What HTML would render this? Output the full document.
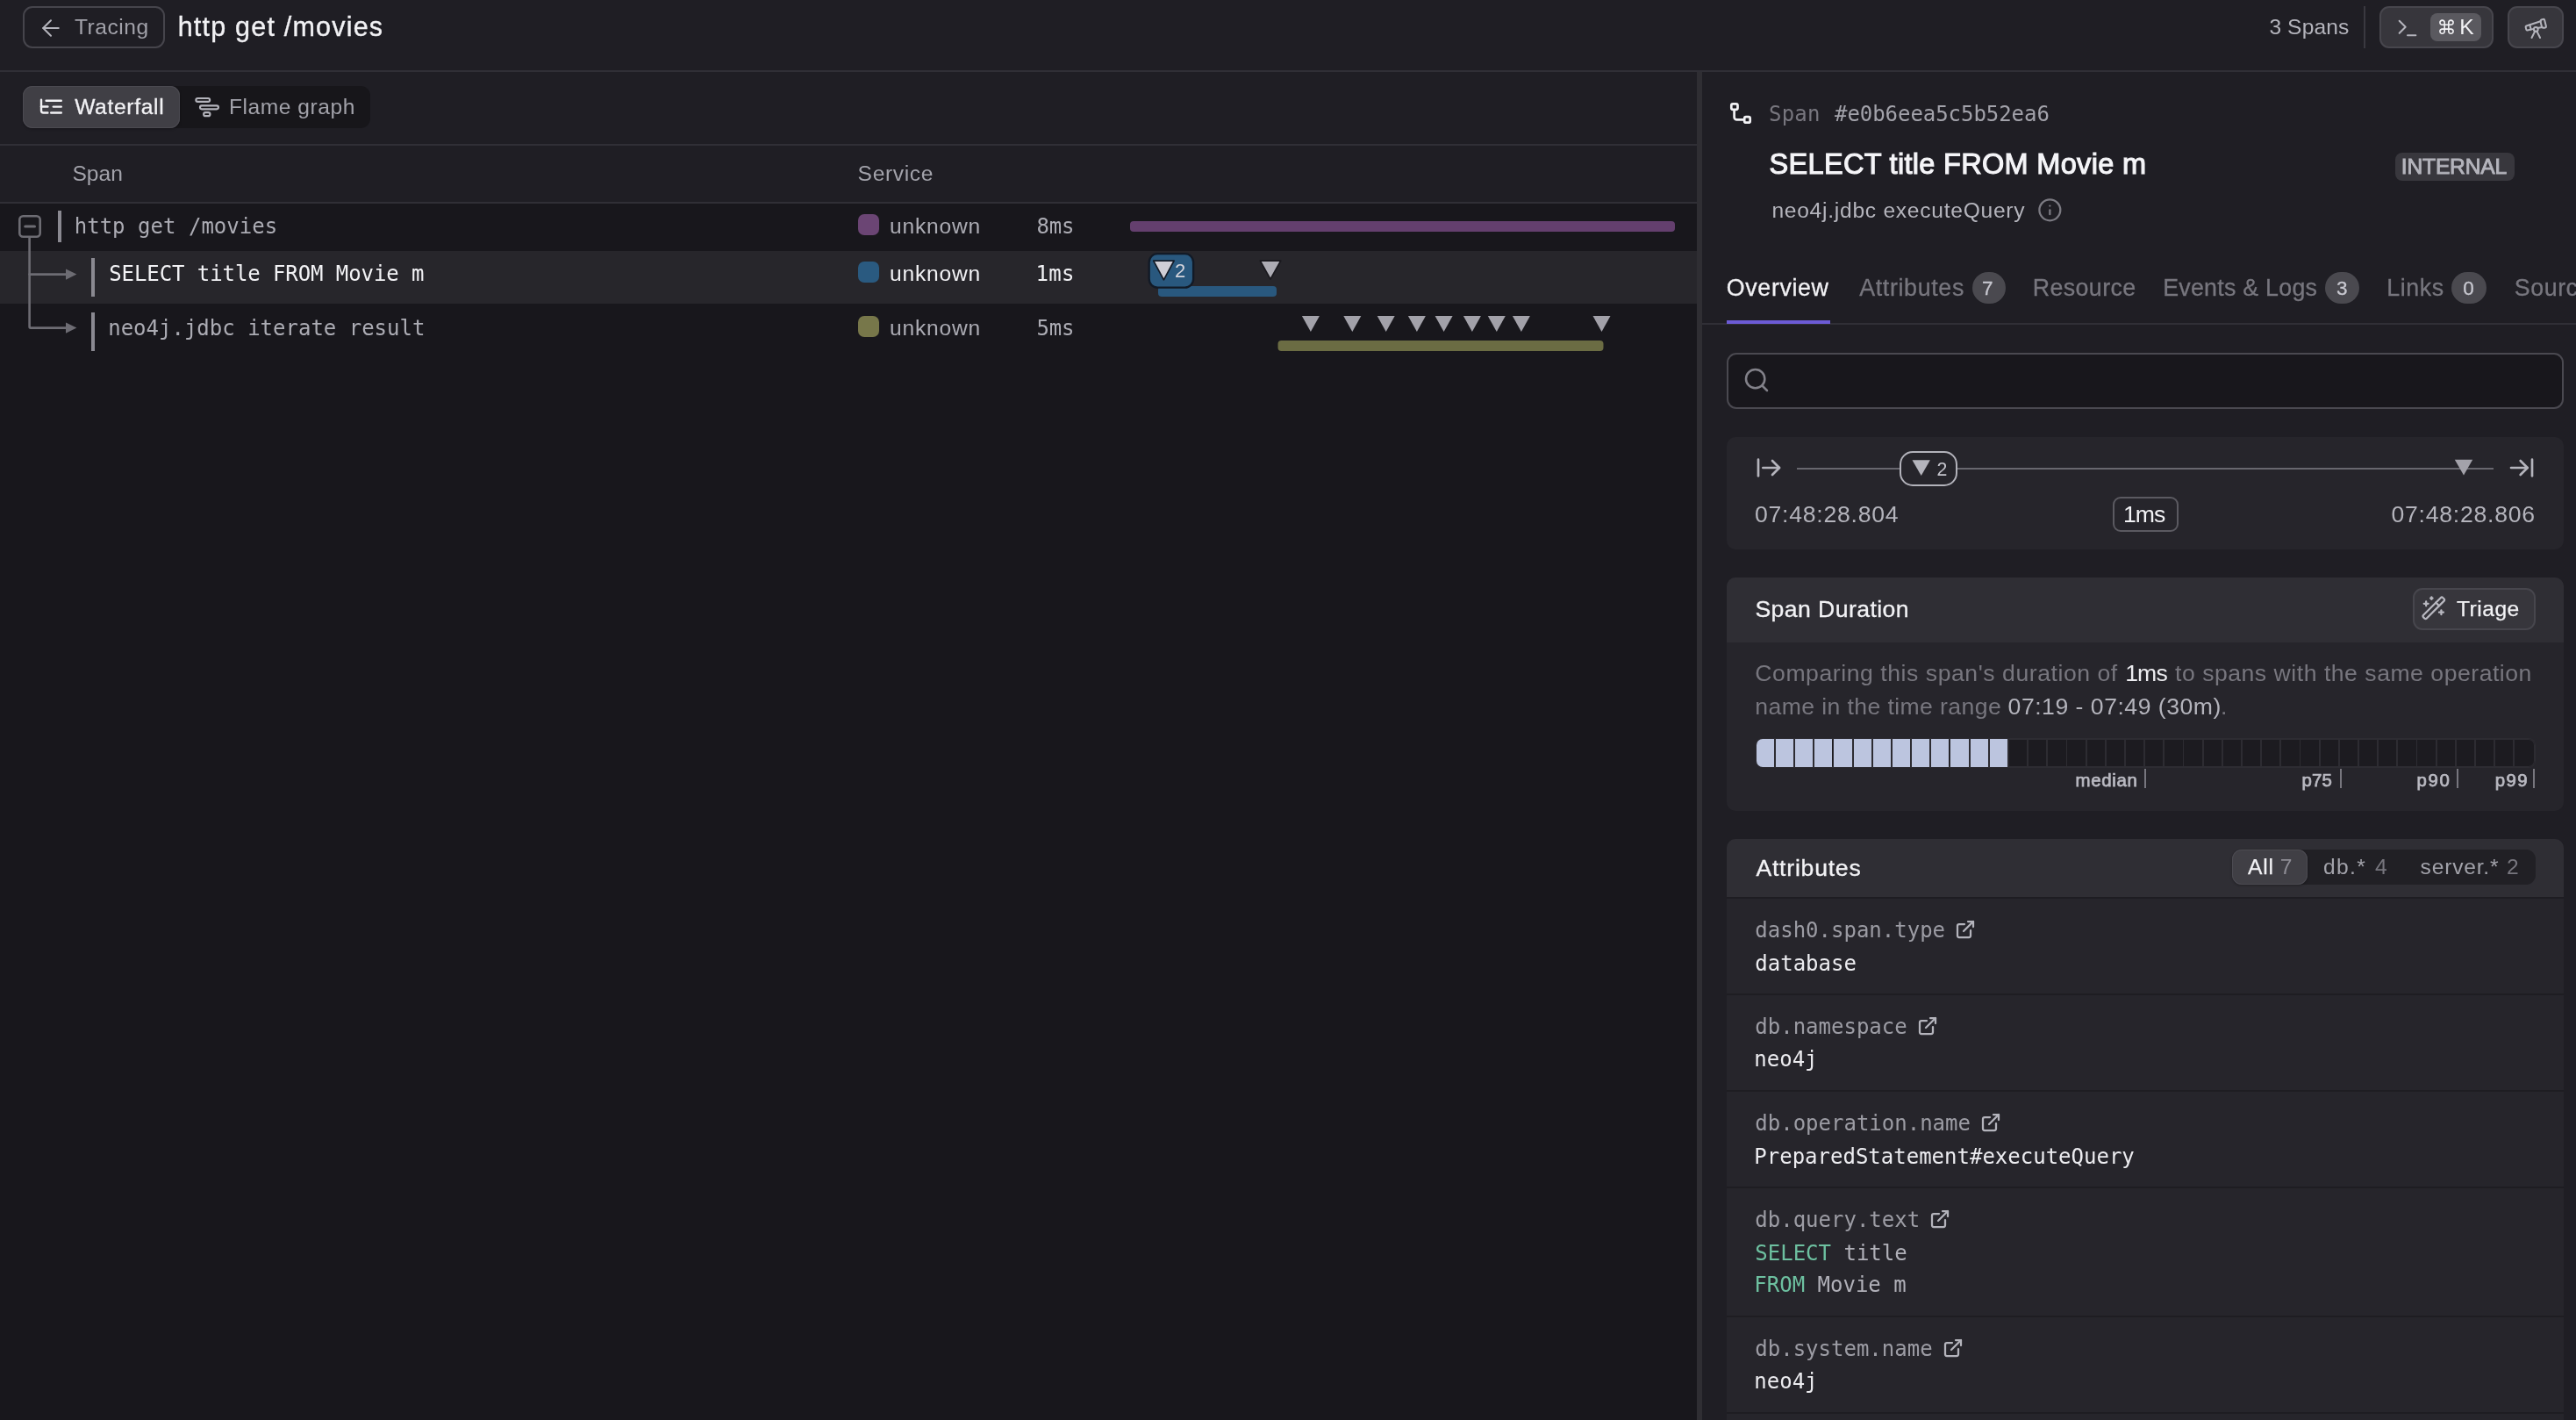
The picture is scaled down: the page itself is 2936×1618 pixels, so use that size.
<!DOCTYPE html>
<html lang="en">
<head>
<meta charset="utf-8">
<title>http get /movies - Tracing</title>
<style>
*{box-sizing:border-box;margin:0;padding:0}
html,body{width:2936px;height:1618px;overflow:hidden;background:#1f1e24}
@media (max-width:1600px){html{zoom:.5}}
body{position:relative;font-family:"Liberation Sans", "DejaVu Sans", sans-serif;color:#f2f2f5;-webkit-font-smoothing:antialiased}
body>*{will-change:transform}
.abs,.t,svg.i{position:absolute}
.t{white-space:nowrap;line-height:40px;display:block}
.m{font-family:"DejaVu Sans Mono", "Liberation Mono", monospace}
svg.i{overflow:visible;fill:none;stroke-linecap:round;stroke-linejoin:round}
/* top bar */
.topbar{left:0;top:0;width:2936px;height:82px;border-bottom:2px solid #302f36;background:#1f1e24}
.btn{border:2px solid #46454c;border-radius:11px}
.btn.fill{background:#37363c;border-color:#47464d}
.kbd{background:#5a595f;border-radius:8px}
.vsep{background:#3a3940}
/* left pane */
.left{left:0;top:82px;width:1934px;height:1536px;background:#18171c;overflow:hidden}
.toolbar{left:0;top:0;width:1934px;height:84px;background:#1f1e24;border-bottom:2px solid #302f36}
.seg{background:#17161a;border-radius:11px}
.seg .on{background:#403f45;border-radius:11px;box-shadow:inset 0 0 0 1px #4b4a51,0 1px 3px rgba(0,0,0,.3)}
.thead{left:0;top:84px;width:1934px;height:66px;background:#1f1e24;border-bottom:2px solid #302f36}
.row{left:0;width:1934px}
.row.sel{background:#27262b}
.bar{border-radius:4px;height:12px}
.sw{width:24px;height:24px;border-radius:7px}
.divider{left:1934px;top:82px;width:6px;height:1536px;background:#2f2e33}
/* right pane */
.right{left:1940px;top:82px;width:996px;height:1536px;background:#1f1e24;overflow:hidden}
.badge{background:#38373d;border-radius:8px}
.cnt{background:#4a494f;border-radius:18px}
.tabline{background:#302f36}
.tabsel{background:#6c5bd6}
.search{border:2px solid #4a4950;border-radius:11px;background:#18171c}
.card{background:#26252b;border-radius:10px;overflow:hidden}
.card .hd{left:0;top:0;width:100%;background:#2f2e34}
.sepline{background:#1e1d22;height:2px;left:0;width:100%}
.pill{border:2.4px solid #b2b2ba;border-radius:15px;background:#26252b}
.dur{border:2px solid #5b5a61;border-radius:9px}
.hist{border-radius:7px;background:#1c1b20;box-shadow:inset 0 0 0 1px #2d2c32,0 0 0 1px #2d2c32}
.hist b:first-of-type{border-radius:7px 0 0 7px}
.hist i{position:absolute;top:0;height:100%;width:1.9px;background:#2d2c32}
.hist b{position:absolute;top:0;height:100%;background:#bcc5df}
.tick{width:2px;background:#77767e}
</style>
</head>
<body>
<header class="abs topbar"><div class="abs btn" style="left:26px;top:7px;width:162px;height:48px;"></div><svg class="i" style="left:42.75px;top:17.1px" width="30" height="30" viewBox="0 0 24 24" stroke="#b4b4bc" stroke-width="1.6" ><path d="m12 19-7-7 7-7"/><path d="M19 12H5"/></svg><span class="t" style="left:85px;top:11.2px;font-size:24.6px;color:#a2a2aa;letter-spacing:0.5px">Tracing</span><h1 class="t" style="left:202.68px;top:10px;font-size:30.5px;color:#f2f2f5;font-weight:400;letter-spacing:1.21px;-webkit-text-stroke:0.35px">http get /movies</h1><span class="t" style="left:2586.4px;top:11px;font-size:24.6px;color:#b4b4bc;letter-spacing:0.11px">3 Spans</span><div class="abs vsep" style="left:2694px;top:7px;width:2px;height:48px;"></div><div class="abs btn fill" style="left:2712px;top:7px;width:130px;height:48px;"></div><svg class="i" style="left:2729.7px;top:18.1px" width="28" height="28" viewBox="0 0 24 24" stroke="#b4b4bc" stroke-width="1.75" ><polyline points="4 17 10 11 4 5"/><line x1="12" x2="20" y1="19" y2="19"/></svg><div class="abs kbd" style="left:2770px;top:15px;width:58px;height:32px;"></div><span class="t cmd" style="left:2777.5px;top:12.2px;font-size:22px;color:#f2f2f5">⌘</span><span class="t" style="left:2803.2px;top:11.2px;font-size:24.6px;color:#f2f2f5">K</span><div class="abs btn fill" style="left:2858px;top:7px;width:64px;height:48px;"></div><svg class="i" style="left:2875.9px;top:17.8px" width="28.6" height="28.6" viewBox="0 0 24 24" stroke="#b4b4bc" stroke-width="1.7" ><path d="m10.065 12.493-6.18 1.318a.934.934 0 0 1-1.108-.702l-.537-2.15a1.07 1.07 0 0 1 .691-1.265l13.504-4.44"/><path d="m13.56 11.747 4.332-.924"/><path d="m16 21-3.105-6.21"/><path d="M16.485 5.94a2 2 0 0 1 1.455-2.425l1.09-.272a1 1 0 0 1 1.212.727l1.515 6.06a1 1 0 0 1-.727 1.213l-1.09.272a2 2 0 0 1-2.425-1.455z"/><path d="m6.158 8.633 1.114 4.456"/><path d="m8 21 3.105-6.21"/><circle cx="12" cy="13" r="2"/></svg></header>
<main class="abs left"><div class="abs toolbar"><div class="abs seg" style="left:26px;top:16px;width:396px;height:48px;"><div class="abs on" style="left:0px;top:0px;width:179px;height:48px;"></div></div><svg class="i" style="left:0;top:0" width="300" height="84" viewBox="0 82 300 84" stroke="#f2f2f5" stroke-width="2.4"><path d="M47 113.6V126a2.5 2.5 0 0 0 2.5 2.5H54.4"/><path d="M47 121.5H54.4"/><path d="M52.6 114.7H69.8"/><path d="M60.8 121.6H69.8"/><path d="M58.2 128.5H69.8"/><g stroke="#b4b4bc" stroke-width="2.2"><rect x="223.4" y="112" width="15.7" height="3.9" rx="1.95"/><rect x="228" y="120.4" width="20.9" height="3.9" rx="1.95"/><rect x="232.2" y="128.1" width="7.2" height="4.1" rx="2"/></g></svg><span class="t" style="left:85.15px;top:19.9px;font-size:24.6px;color:#f2f2f5;letter-spacing:0.68px;-webkit-text-stroke:0.3px">Waterfall</span><span class="t" style="left:261px;top:19.9px;font-size:24.6px;color:#a2a2aa;letter-spacing:0.53px">Flame graph</span></div><div class="abs thead"><span class="t" style="left:82.4px;top:12px;font-size:24.6px;color:#a2a2aa;letter-spacing:0.01px">Span</span><span class="t" style="left:977.6px;top:12px;font-size:24.6px;color:#a2a2aa;letter-spacing:0.63px">Service</span></div><div class="abs row" style="top:150px;height:54px"><div class="abs" style="left:66px;top:8px;width:4px;height:36px;background:#8a8991"></div><span class="t m" style="left:84.7px;top:5.7px;font-size:24px;color:#acacb4;letter-spacing:0.02px">http get /movies</span><div class="abs sw" style="left:978px;top:12px;width:24px;height:24px;background:#6b4574"></div><span class="t" style="left:1014px;top:5.7px;font-size:24.6px;color:#acacb4;letter-spacing:0.79px">unknown</span><span class="t m" style="left:1181.5px;top:5.7px;font-size:24px;color:#acacb4;letter-spacing:-0.2px">8ms</span><div class="abs bar" style="left:1288px;top:252px;width:621px;height:12px;background:#643f6e;top:20px"></div></div><div class="abs row sel" style="top:204px;height:60px"><div class="abs" style="left:104px;top:8px;width:4px;height:44px;background:#8a8991"></div><span class="t m" style="left:124.2px;top:6.2px;font-size:24px;color:#f2f2f5;letter-spacing:-0.08px">SELECT title FROM Movie m</span><div class="abs sw" style="left:978px;top:12px;width:24px;height:24px;background:#2a5a80"></div><span class="t" style="left:1014px;top:6.2px;font-size:24.6px;color:#f2f2f5;letter-spacing:0.79px">unknown</span><span class="t m" style="left:1180.5px;top:6.2px;font-size:24px;color:#f2f2f5;letter-spacing:0.3px">1ms</span><svg class="i" style="left:1300px;top:0" width="180" height="60" viewBox="1300 286 180 60"><rect x="1320" y="326" width="135" height="12" rx="4" fill="#29587e"/><rect x="1309.7" y="289.2" width="50.4" height="38.4" rx="9.5" fill="#29587e" stroke="#121a26" stroke-width="2.3"/><path d="M1314.67 297.07H1338.13L1326.4 318.83z" fill="#cfced6" stroke="#141c28" stroke-width="1.74" stroke-linejoin="round"/><path d="M1436.27 297.07H1459.73L1448 318.07z" fill="#adacb4" stroke="#1a191e" stroke-width="1.74" stroke-linejoin="round"/></svg><span class="t" style="left:1338.9px;top:3.3px;font-size:22px;color:#d4d4dc">2</span></div><div class="abs row" style="top:264px;height:62px"><div class="abs" style="left:104px;top:10px;width:4px;height:44px;background:#8a8991"></div><span class="t m" style="left:123.2px;top:8px;font-size:24px;color:#acacb4">neo4j.jdbc iterate result</span><div class="abs sw" style="left:978px;top:14px;width:24px;height:24px;background:#77774a"></div><span class="t" style="left:1014px;top:8px;font-size:24.6px;color:#acacb4;letter-spacing:0.79px">unknown</span><span class="t m" style="left:1181.5px;top:8px;font-size:24px;color:#acacb4;letter-spacing:-0.2px">5ms</span><svg class="i" style="left:1440px;top:0" width="420" height="62" viewBox="1440 346 420 62"><rect x="1456.5" y="388" width="371" height="12" rx="4" fill="#6b6c43"/><path d="M1483.9 360H1503.9L1493.9 378z" fill="#a2a1a9"/><path d="M1531.3 360H1551.3L1541.3 378z" fill="#a2a1a9"/><path d="M1569.7 360H1589.7L1579.7 378z" fill="#a2a1a9"/><path d="M1604.9 360H1624.9L1614.9 378z" fill="#a2a1a9"/><path d="M1635.6 360H1655.6L1645.6 378z" fill="#a2a1a9"/><path d="M1667.9 360H1687.9L1677.9 378z" fill="#a2a1a9"/><path d="M1695.8 360H1715.8L1705.8 378z" fill="#a2a1a9"/><path d="M1723.9 360H1743.9L1733.9 378z" fill="#a2a1a9"/><path d="M1815.5 360H1835.5L1825.5 378z" fill="#a2a1a9"/></svg></div><svg class="i" style="left:0;top:150px" width="120" height="180" viewBox="0 232 120 180" stroke="#6d6c73" stroke-width="2.6" stroke-linecap="butt"><rect x="22.3" y="246.2" width="23.4" height="23.6" rx="4"/><path d="M28.8 258H39.4" stroke-width="3.2" stroke-linecap="round"/><path d="M33.6 271V372.3a1.3 1.3 0 0 0 1.3 1.3H76"/><path d="M33.6 312.6H76"/><path d="M75 306.4 87.4 312.6 75 318.8z" fill="#6d6c73" stroke="none"/><path d="M75 367.4 87.4 373.6 75 379.8z" fill="#6d6c73" stroke="none"/></svg></main>
<div class="abs divider"></div>
<aside class="abs right"><svg class="i" style="left:20px;top:18px" width="60" height="60" viewBox="1960 100 60 60" stroke="#f2f2f5" stroke-width="2.7"><rect x="1973.3" y="118.3" width="7.2" height="6.6" rx="1.8"/><path d="M1976.6 126.2V133.4a3 3 0 0 0 3 3H1987"/><rect x="1988.2" y="133.1" width="6.5" height="6.6" rx="1.8"/></svg><span class="t m" style="left:76.1px;top:27.6px;font-size:24px;color:#77767e;letter-spacing:0.18px">Span</span><span class="t m" style="left:151px;top:27.6px;font-size:24px;color:#a2a2aa;letter-spacing:-0.05px">#e0b6eea5c5b52ea6</span><h2 class="t" style="left:76.55px;top:85px;font-size:32.5px;color:#f5f5f8;font-weight:400;letter-spacing:0.31px;-webkit-text-stroke:1.1px">SELECT title FROM Movie m</h2><div class="abs badge" style="left:790px;top:92px;width:136px;height:32px;"></div><span class="t" style="left:796.85px;top:88.2px;font-size:24.6px;color:#b4b4bc;letter-spacing:-0.19px;-webkit-text-stroke:0.9px">INTERNAL</span><span class="t" style="left:79.4px;top:138.2px;font-size:24.6px;color:#b4b4bc;letter-spacing:0.73px">neo4j.jdbc executeQuery</span><svg class="i" style="left:381.65px;top:142.65px" width="28.7" height="28.7" viewBox="0 0 24 24" stroke="#7b7a82" stroke-width="1.9" ><circle cx="12" cy="12" r="10"/><path d="M12 16v-4"/><path d="M12 8h.01"/></svg><div class="abs tabline" style="left:0px;top:286px;width:996px;height:2px;"></div><div class="abs tabsel" style="left:28px;top:283px;width:118px;height:4px;"></div><span class="t" style="left:27.85px;top:225.7px;font-size:26.8px;color:#f2f2f5;letter-spacing:0.63px;-webkit-text-stroke:0.3px">Overview</span><span class="t" style="left:179.15px;top:225.7px;font-size:26.8px;color:#77767e;letter-spacing:0.66px;-webkit-text-stroke:0.3px">Attributes</span><div class="abs cnt" style="left:308px;top:228px;width:38px;height:36px;"></div><span class="t" style="left:319.05px;top:226.5px;font-size:22.5px;color:#c8c8d0;-webkit-text-stroke:0.3px">7</span><span class="t" style="left:376.75px;top:225.7px;font-size:26.8px;color:#77767e;letter-spacing:0.39px;-webkit-text-stroke:0.3px">Resource</span><span class="t" style="left:525.15px;top:225.7px;font-size:26.8px;color:#77767e;letter-spacing:0.25px;-webkit-text-stroke:0.3px">Events &amp; Logs</span><div class="abs cnt" style="left:710px;top:228px;width:39px;height:36px;"></div><span class="t" style="left:722.95px;top:226.5px;font-size:22.5px;color:#c8c8d0;-webkit-text-stroke:0.3px">3</span><span class="t" style="left:780.15px;top:225.7px;font-size:26.8px;color:#77767e;letter-spacing:0.64px;-webkit-text-stroke:0.3px">Links</span><div class="abs cnt" style="left:854px;top:228px;width:40px;height:36px;"></div><span class="t" style="left:867.15px;top:226.5px;font-size:22.5px;color:#c8c8d0;-webkit-text-stroke:0.3px">0</span><span class="t" style="left:925.85px;top:225.7px;font-size:26.8px;color:#77767e;letter-spacing:0.54px;-webkit-text-stroke:0.3px">Source</span><div class="abs search" style="left:28px;top:320px;width:954px;height:64px;"></div><svg class="i" style="left:46.1px;top:335.2px" width="32" height="32" viewBox="0 0 24 24" stroke="#828189" stroke-width="1.9" ><circle cx="11" cy="11" r="8"/><path d="m21 21-4.3-4.3"/></svg><section class="abs card" style="left:28px;top:416px;width:954px;height:128px;"><svg class="i" style="left:31.8px;top:19.1px" width="32" height="32" viewBox="0 0 24 24" stroke="#b4b4bc" stroke-width="2" ><path d="M3 5v14"/><path d="M21 12H7"/><path d="m15 18 6-6-6-6"/></svg><div class="abs" style="left:80px;top:35px;width:794px;height:2px;background:#68676e"></div><div class="abs pill" style="left:197px;top:16px;width:66px;height:40px;"></div><svg class="i" style="left:0;top:0" width="954" height="128" viewBox="1968 498 954 128"><path d="M2179.5 524.3H2199.8999999999996L2189.7 541.9z" fill="#b4b4bc"/><path d="M2797.8 523.8H2818.2L2808 541.5999999999999z" fill="#a3a2aa"/></svg><span class="t" style="left:239.5px;top:16.8px;font-size:21.3px;color:#c4c4cc">2</span><svg class="i" style="left:890.4px;top:19.2px" width="32" height="32" viewBox="0 0 24 24" stroke="#b4b4bc" stroke-width="2" ><path d="M17 12H3"/><path d="m11 18 6-6-6-6"/><path d="M21 5v14"/></svg><span class="t" style="left:32px;top:68px;font-size:26.6px;color:#b4b4bc;letter-spacing:0.76px">07:48:28.804</span><div class="abs dur" style="left:440px;top:68px;width:75px;height:40px;"></div><span class="t" style="left:452px;top:68.3px;font-size:26.6px;color:#f2f2f5;letter-spacing:-0.97px">1ms</span><span class="t" style="left:757.4px;top:68px;font-size:26.6px;color:#b4b4bc;letter-spacing:0.76px">07:48:28.806</span></section><section class="abs card" style="left:28px;top:576px;width:954px;height:266px;"><div class="abs hd" style="left:0px;top:0px;width:954px;height:74px;"></div><h3 class="t" style="left:32.45px;top:16.4px;font-size:26.6px;color:#f2f2f5;font-weight:400;letter-spacing:0.43px;-webkit-text-stroke:0.3px">Span Duration</h3><div class="abs btn fill" style="left:782px;top:12px;width:140px;height:48px;"></div><svg class="i" style="left:791.2px;top:20.3px" width="29.6" height="29.6" viewBox="0 0 24 24" stroke="#b8b8c0" stroke-width="1.8" ><path d="m21.64 3.64-1.28-1.28a1.21 1.21 0 0 0-1.72 0L2.36 18.64a1.21 1.21 0 0 0 0 1.72l1.28 1.28a1.2 1.2 0 0 0 1.72 0L21.64 5.36a1.2 1.2 0 0 0 0-1.72"/><path d="m14 7 3 3"/><path d="M5 6v4"/><path d="M19 14v4"/><path d="M10 2v2"/><path d="M7 8H3"/><path d="M21 16h-4"/><path d="M11 3H9"/></svg><span class="t" style="left:832.03px;top:15.6px;font-size:24.6px;color:#f2f2f5;letter-spacing:0.49px;-webkit-text-stroke:0.25px">Triage</span><span class="t" style="left:32.3px;top:88.6px;font-size:26.6px;color:#77767e;letter-spacing:0.55px">Comparing this span&#x27;s duration of</span><span class="t" style="left:454.2px;top:88.6px;font-size:26.6px;color:#ececf0;letter-spacing:-0.87px">1ms</span><span class="t" style="left:511px;top:88.6px;font-size:26.6px;color:#77767e;letter-spacing:0.52px">to spans with the same operation</span><span class="t" style="left:32.3px;top:126.7px;font-size:26.6px;color:#77767e;letter-spacing:0.4px">name in the time range</span><span class="t" style="left:320.6px;top:126.7px;font-size:26.6px;color:#b4b4bc;letter-spacing:0.51px">07:19 - 07:49 (30m)</span><span class="t" style="left:563px;top:126.7px;font-size:26.6px;color:#77767e">.</span><div class="abs hist" style="left:34px;top:184px;width:887px;height:32px;"><i style="left:20.0px"></i><i style="left:42.1px"></i><i style="left:64.3px"></i><i style="left:86.5px"></i><i style="left:108.7px"></i><i style="left:130.8px"></i><i style="left:153.0px"></i><i style="left:175.2px"></i><i style="left:197.3px"></i><i style="left:219.5px"></i><i style="left:241.7px"></i><i style="left:263.8px"></i><i style="left:286.0px"></i><i style="left:308.2px"></i><i style="left:330.4px"></i><i style="left:352.5px"></i><i style="left:374.7px"></i><i style="left:396.9px"></i><i style="left:419.0px"></i><i style="left:441.2px"></i><i style="left:463.4px"></i><i style="left:485.5px"></i><i style="left:507.7px"></i><i style="left:529.9px"></i><i style="left:552.0px"></i><i style="left:574.2px"></i><i style="left:596.4px"></i><i style="left:618.6px"></i><i style="left:640.7px"></i><i style="left:662.9px"></i><i style="left:685.1px"></i><i style="left:707.2px"></i><i style="left:729.4px"></i><i style="left:751.6px"></i><i style="left:773.8px"></i><i style="left:795.9px"></i><i style="left:818.1px"></i><i style="left:840.3px"></i><i style="left:862.4px"></i><b style="left:0px;width:20.3px"></b><b style="left:21.9px;width:20.3px"></b><b style="left:44.0px;width:20.3px"></b><b style="left:66.2px;width:20.3px"></b><b style="left:88.4px;width:20.3px"></b><b style="left:110.6px;width:20.3px"></b><b style="left:132.7px;width:20.3px"></b><b style="left:154.9px;width:20.3px"></b><b style="left:177.1px;width:20.3px"></b><b style="left:199.2px;width:20.3px"></b><b style="left:221.4px;width:20.3px"></b><b style="left:243.6px;width:20.3px"></b><b style="left:265.7px;width:20.3px"></b></div><div class="abs tick" style="left:476px;top:218px;width:2px;height:22px;"></div><div class="abs tick" style="left:699px;top:218px;width:2px;height:22px;"></div><div class="abs tick" style="left:832px;top:218px;width:2px;height:22px;"></div><div class="abs tick" style="left:919.4px;top:218px;width:2px;height:22px;"></div><span class="t" style="left:397.57px;top:210.6px;font-size:20.4px;color:#b9b9c1;letter-spacing:0.66px;-webkit-text-stroke:0.75px">median</span><span class="t" style="left:655.38px;top:210.6px;font-size:20.4px;color:#b9b9c1;letter-spacing:0.28px;-webkit-text-stroke:0.75px">p75</span><span class="t" style="left:786.38px;top:210.6px;font-size:20.4px;color:#b9b9c1;letter-spacing:1.73px;-webkit-text-stroke:0.75px">p90</span><span class="t" style="left:875.78px;top:210.6px;font-size:20.4px;color:#b9b9c1;letter-spacing:1.43px;-webkit-text-stroke:0.75px">p99</span></section><section class="abs card" style="left:28px;top:874px;width:954px;height:700px;border-radius:10px 10px 0 0"><div class="abs hd" style="left:0px;top:0px;width:954px;height:66px;"></div><h3 class="t" style="left:33.45px;top:12.6px;font-size:26.6px;color:#f2f2f5;font-weight:400;letter-spacing:0.77px;-webkit-text-stroke:0.3px">Attributes</h3><div class="abs seg" style="left:576px;top:12px;width:346px;height:40px;background:#212025"><div class="abs on" style="left:0px;top:0px;width:86px;height:40px;"></div></div><span class="t" style="left:594.12px;top:12px;font-size:24.6px;color:#f2f2f5;letter-spacing:0.74px;-webkit-text-stroke:0.25px">All</span><span class="t" style="left:630.7px;top:12px;font-size:24.6px;color:#8d8c94">7</span><span class="t" style="left:680px;top:12px;font-size:24.6px;color:#a2a2aa;letter-spacing:1.34px">db.*</span><span class="t" style="left:739px;top:12px;font-size:24.6px;color:#77767e">4</span><span class="t" style="left:790.6px;top:12px;font-size:24.6px;color:#a2a2aa;letter-spacing:0.8px">server.*</span><span class="t" style="left:889px;top:12px;font-size:24.6px;color:#77767e">2</span><div class="abs sepline" style="left:0px;top:66px;width:954px;height:2px;"></div><span class="t m" style="left:32.3px;top:84px;font-size:24px;color:#9c9ca4">dash0.span.type</span><svg class="i" style="left:260.1px;top:91.2px" width="24" height="24" viewBox="0 0 24 24" stroke="#b4b4bc" stroke-width="2.25" ><path d="M15 3h6v6"/><path d="M10 14 21 3"/><path d="M18 13v6a2 2 0 0 1-2 2H5a2 2 0 0 1-2-2V8a2 2 0 0 1 2-2h6"/></svg><span class="t m" style="left:32.3px;top:121.6px;font-size:24px;color:#ececf0">database</span><div class="abs sepline" style="left:0px;top:176px;width:954px;height:2px;"></div><span class="t m" style="left:32.3px;top:193.6px;font-size:24px;color:#9c9ca4">db.namespace</span><svg class="i" style="left:216.7px;top:200.8px" width="24" height="24" viewBox="0 0 24 24" stroke="#b4b4bc" stroke-width="2.25" ><path d="M15 3h6v6"/><path d="M10 14 21 3"/><path d="M18 13v6a2 2 0 0 1-2 2H5a2 2 0 0 1-2-2V8a2 2 0 0 1 2-2h6"/></svg><span class="t m" style="left:31.3px;top:231.4px;font-size:24px;color:#ececf0">neo4j</span><div class="abs sepline" style="left:0px;top:286px;width:954px;height:2px;"></div><span class="t m" style="left:32.3px;top:304.2px;font-size:24px;color:#9c9ca4">db.operation.name</span><svg class="i" style="left:289px;top:311.4px" width="24" height="24" viewBox="0 0 24 24" stroke="#b4b4bc" stroke-width="2.25" ><path d="M15 3h6v6"/><path d="M10 14 21 3"/><path d="M18 13v6a2 2 0 0 1-2 2H5a2 2 0 0 1-2-2V8a2 2 0 0 1 2-2h6"/></svg><span class="t m" style="left:31.3px;top:342px;font-size:24px;color:#ececf0">PreparedStatement#executeQuery</span><div class="abs sepline" style="left:0px;top:396px;width:954px;height:2px;"></div><span class="t m" style="left:32.3px;top:414.2px;font-size:24px;color:#9c9ca4">db.query.text</span><svg class="i" style="left:231.2px;top:421.4px" width="24" height="24" viewBox="0 0 24 24" stroke="#b4b4bc" stroke-width="2.25" ><path d="M15 3h6v6"/><path d="M10 14 21 3"/><path d="M18 13v6a2 2 0 0 1-2 2H5a2 2 0 0 1-2-2V8a2 2 0 0 1 2-2h6"/></svg><span class="t m" style="left:32.3px;top:451.8px;font-size:24px;color:#b0b0b8"><span style="color:#6dc0a0">SELECT</span> title</span><span class="t m" style="left:31.3px;top:487.8px;font-size:24px;color:#b0b0b8"><span style="color:#6dc0a0">FROM</span> Movie m</span><div class="abs sepline" style="left:0px;top:543px;width:954px;height:2px;"></div><span class="t m" style="left:32.3px;top:560.6px;font-size:24px;color:#9c9ca4">db.system.name</span><svg class="i" style="left:245.6px;top:567.8px" width="24" height="24" viewBox="0 0 24 24" stroke="#b4b4bc" stroke-width="2.25" ><path d="M15 3h6v6"/><path d="M10 14 21 3"/><path d="M18 13v6a2 2 0 0 1-2 2H5a2 2 0 0 1-2-2V8a2 2 0 0 1 2-2h6"/></svg><span class="t m" style="left:31.3px;top:598.4px;font-size:24px;color:#ececf0">neo4j</span><div class="abs sepline" style="left:0px;top:653px;width:954px;height:2px;"></div></section></aside>
</body>
</html>
